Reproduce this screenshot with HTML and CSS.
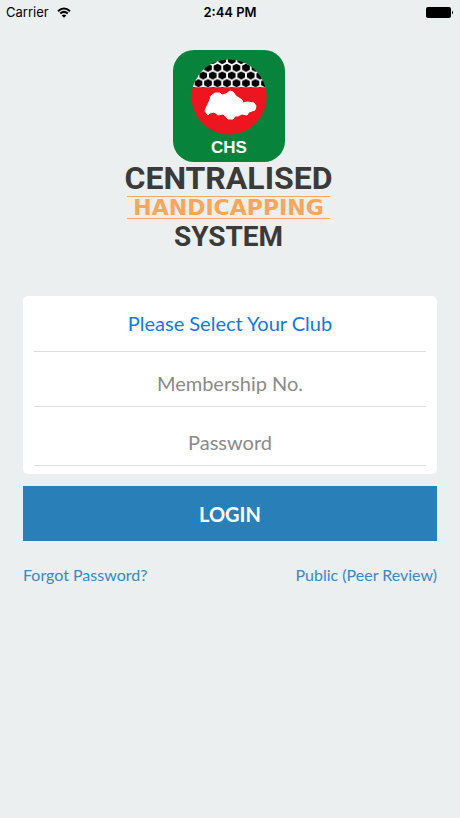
FILE: index.html
```html
<!DOCTYPE html>
<html lang="en">
<head>
    <meta charset="UTF-8">
    <meta name="viewport" content="width=device-width, initial-scale=1.0">
    <title>Centralised Handicapping System</title>
    <link rel="stylesheet" href="styles.css">
</head>
<body>
    <header class="status-bar">
        <div class="carrier">
            <span>Carrier</span>
            <svg width="14" height="11" viewBox="0 0 14 11" fill="none" stroke="#000" stroke-width="2">
                <path d="M1 4.200Q7-1.200 13 4.200"/>
                <path d="M3.200 6.600Q7 3.200 10.800 6.600"/>
                <path d="M7 10.800L4.700 8.500Q7 6.500 9.300 8.500Z" fill="#000" stroke="none"/>
            </svg>
        </div>
        <div class="time">2:44 PM</div>
        <div class="battery">
            <svg width="28" height="11" viewBox="0 0 28 11">
                <rect x="0" y="0" width="25" height="11" rx="2"/>
                <path d="M26 3.500Q28 5.500 26 7.500Z"/>
            </svg>
        </div>
    </header>

    <main class="login">
        <div class="logo">
            <svg class="badge" width="112" height="112" viewBox="0 0 112 112">
                <defs>
                    <!-- two staggered rows of hexagons per tile -->
                    <pattern id="mesh" x="63.500" y="21.700" width="9.500" height="15.400" patternUnits="userSpaceOnUse">
                        <rect width="9.500" height="15.400" fill="#fff"/>
                        <path d="M4.750-.3L8.600 1.800V5.800L4.750 7.900L.9 5.800V1.800Z"/>
                        <path d="M0 7.400L3.850 9.500V13.500L0 15.600L-3.850 13.500V9.500Z"/>
                        <path d="M9.500 7.400L13.350 9.500V13.500L9.500 15.600L5.650 13.500V9.500Z"/>
                    </pattern>
                </defs>
                <rect width="112" height="112" rx="21" fill="#08833b"/>
                <path d="M19.700 37.500A37.500 37.500 0 0 1 92.300 37.500Z" fill="url(#mesh)"/>
                <path d="M19.700 37.500A37.500 37.500 0 1 0 92.300 37.500Z" fill="#ed1620"/>
                <path d="M38 46L42 43L47 43L49 45L53 44L57 41L60 42L63 46L69 50L70 53L74 52L81 53L83 56L82 60L76 62L74 65L69 64L65 66L62 66L60 69L55 69L50 64L45 65L41 62L37 63L35 65L32 61L34 56L36 52Z" fill="#fff" stroke="#fff" stroke-linejoin="round"/>
                <text class="badge-text" x="56" y="103" text-anchor="middle">CHS</text>
            </svg>
            <div class="name">CENTRALISED</div>
            <div class="name-middle">HANDICAPPING</div>
            <div class="name-last">SYSTEM</div>
        </div>

        <form>
            <div class="card">
                <button type="button" class="field club">Please Select Your Club</button>
                <input type="text" class="field" placeholder="Membership No." aria-label="Membership No.">
                <input type="password" class="field password" placeholder="Password" aria-label="Password">
            </div>
            <button type="submit" class="submit">LOGIN</button>
        </form>

        <div class="links">
            <a href="#">Forgot Password?</a>
            <a href="#">Public (Peer Review)</a>
        </div>
    </main>
</body>
</html>
```
FILE: styles.css
```css
* {
    box-sizing: border-box;
}

body {
    margin: 0;
    min-height: 100vh;
    background-color: #ebeff0;
    font-family: Lato, sans-serif;
}

.status-bar {
    display: grid;
    grid-template-columns: 1fr auto 1fr;
    align-items: center;
    height: 24px;
    padding: 0 6px;
    font-family: Inter, sans-serif;
    font-size: 13px;
}

.carrier {
    display: flex;
    align-items: center;
    gap: 8px;
}

.time {
    font-weight: 600;
}

.battery {
    display: flex;
    justify-content: flex-end;
}

.login {
    padding: 26px 23px;
}

.logo {
    display: flex;
    flex-direction: column;
    align-items: center;
    margin-bottom: 42px;
    padding-right: 3px;
    color: #3b3a38;
    font-weight: bold;
}

.badge-text {
    fill: #fff;
    font-family: "Liberation Sans", sans-serif;
    font-size: 17px;
}

.name {
    margin-bottom: 2px;
    font-family: Roboto, sans-serif;
    font-size: 32px;
    line-height: 32px;
}

.name-middle {
    padding: 0 6px;
    border-top: 1px solid #fba55a;
    border-bottom: 1px solid #fba55a;
    color: #fba55a;
    font-family: "DejaVu Sans", sans-serif;
    font-size: 22px;
    line-height: 21px;
}

.name-last {
    font-family: Roboto, sans-serif;
    font-size: 28px;
    line-height: 35px;
}

.card {
    display: flex;
    flex-direction: column;
    padding: 0 11px 8px;
    margin-bottom: 12px;
    border-radius: 5px;
    background-color: #fff;
}

.field {
    width: 100%;
    height: 55px;
    padding: 8px 0 0;
    border: none;
    border-bottom: 1px solid #dcdcdc;
    background: none;
    color: #333;
    font-family: inherit;
    font-size: 20px;
    text-align: center;
}

.field::placeholder {
    color: #8a8a8a;
}

.club {
    height: 56px;
    padding: 0 0 2px;
    color: #1079e4;
}

.password {
    height: 59px;
    padding-top: 12px;
}

.submit {
    width: 100%;
    height: 55px;
    border: none;
    background-color: #2980b9;
    color: #fff;
    font-family: inherit;
    font-size: 20px;
    font-weight: bold;
}

.links {
    display: flex;
    justify-content: space-between;
    margin-top: 24px;
    font-size: 16px;
    line-height: 20px;
}

.links a {
    color: #3a88c0;
    text-decoration: none;
}
```
